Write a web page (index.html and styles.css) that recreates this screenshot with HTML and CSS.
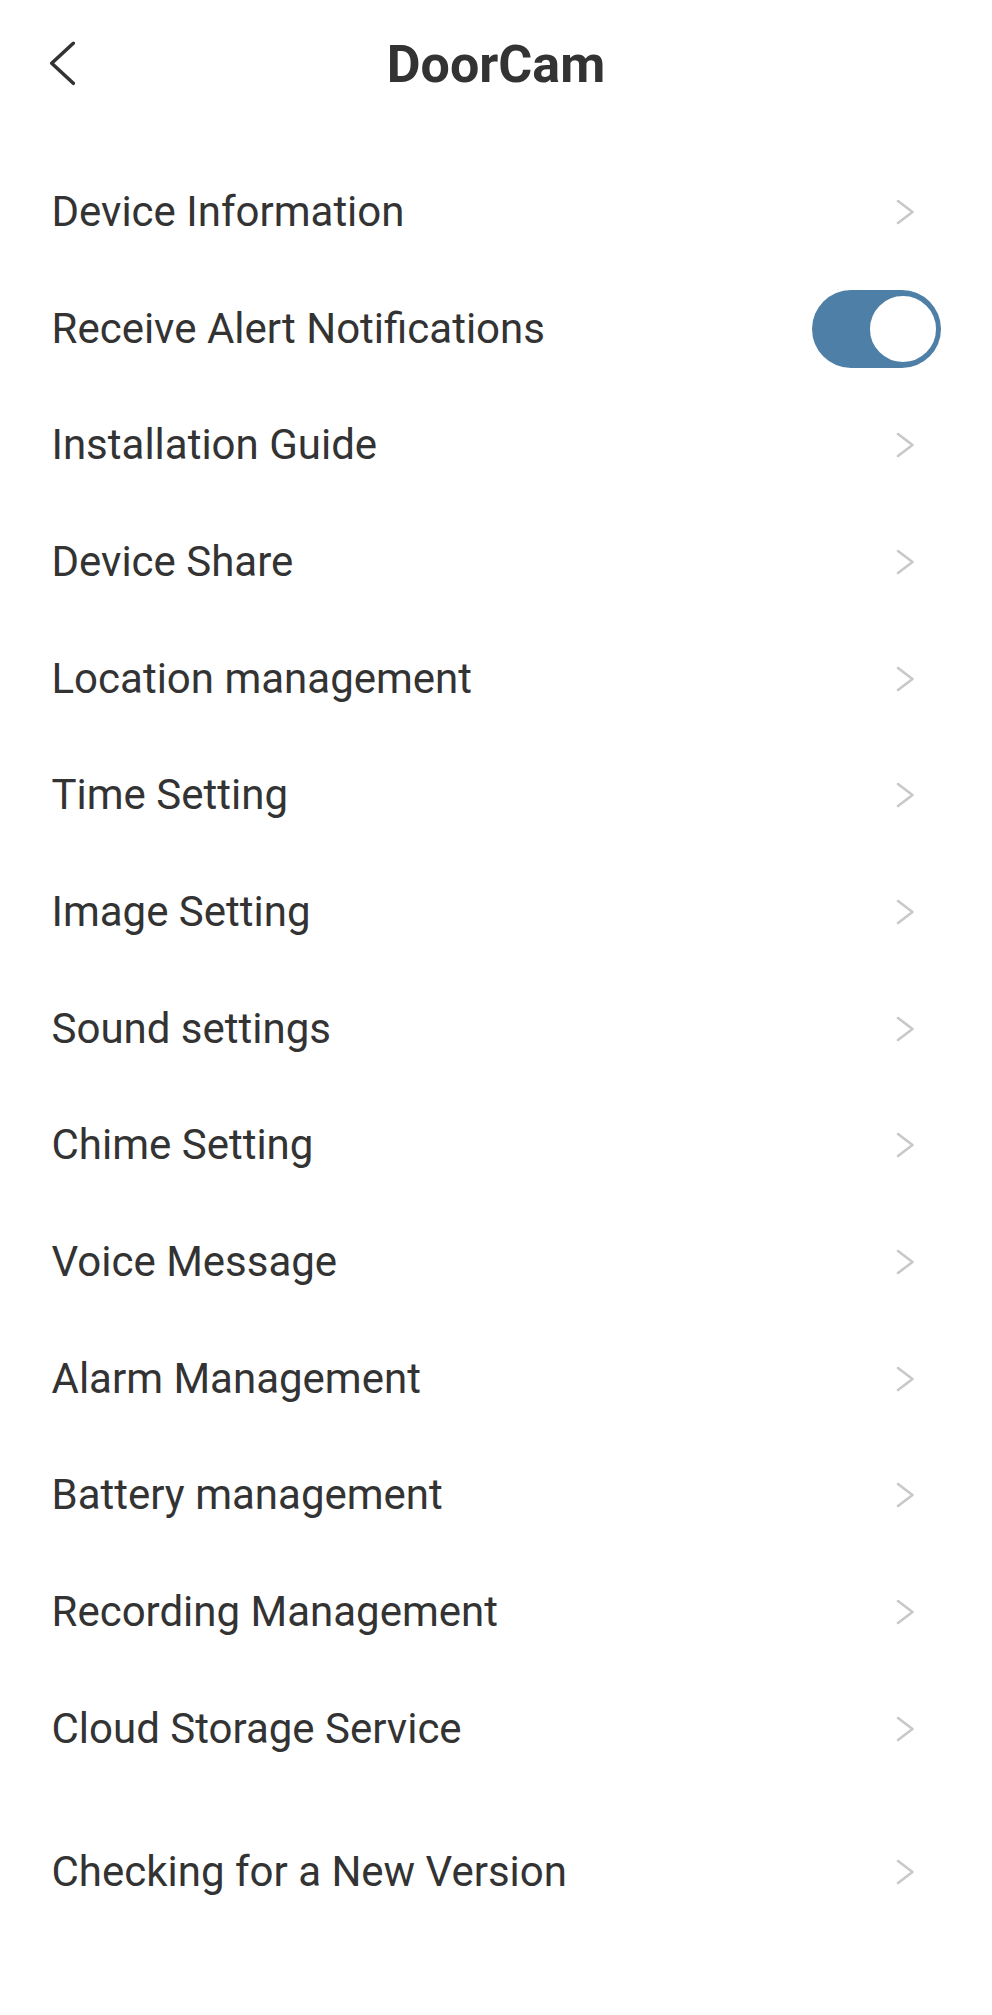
FILE: index.html
```html
<!DOCTYPE html>
<html lang="en">
<head>
  <meta charset="UTF-8">
  <meta name="viewport" content="width=device-width, initial-scale=1.0">
  <title>DoorCam</title>
  <link rel="stylesheet" href="styles.css">
</head>
<body>
  <div class="page">
    <div class="header">
      <button class="back" aria-label="Back">
        <svg width="26" height="46" viewBox="0 0 26 46">
          <path d="M24.3 3.3 L2.7 23.3 L24.3 43.3" fill="none" stroke="#333" stroke-width="3.6" stroke-linecap="round" stroke-linejoin="round"/>
        </svg>
      </button>
      <h1 class="title">DoorCam</h1>
      <div></div>
    </div>

    <ul class="menu">
      <li class="item"><span>Device Information</span><span class="arrow"></span></li>
      <li class="item">
        <span>Receive Alert Notifications</span>
        <label class="switch">
          <input type="checkbox" checked>
          <span class="track"><span class="knob"></span></span>
        </label>
      </li>
      <li class="item"><span>Installation Guide</span><span class="arrow"></span></li>
      <li class="item"><span>Device Share</span><span class="arrow"></span></li>
      <li class="item"><span>Location management</span><span class="arrow"></span></li>
      <li class="item"><span>Time Setting</span><span class="arrow"></span></li>
      <li class="item"><span>Image Setting</span><span class="arrow"></span></li>
      <li class="item"><span>Sound settings</span><span class="arrow"></span></li>
      <li class="item"><span>Chime Setting</span><span class="arrow"></span></li>
      <li class="item"><span>Voice Message</span><span class="arrow"></span></li>
      <li class="item"><span>Alarm Management</span><span class="arrow"></span></li>
      <li class="item"><span>Battery management</span><span class="arrow"></span></li>
      <li class="item"><span>Recording Management</span><span class="arrow"></span></li>
      <li class="item"><span>Cloud Storage Service</span><span class="arrow"></span></li>
      <li class="item item-separated"><span>Checking for a New Version</span><span class="arrow"></span></li>
    </ul>
  </div>

  <script>
    // подставляем шеврон в каждую строку
    document.querySelectorAll('.arrow').forEach(el => {
      el.innerHTML = `
        <svg width="20" height="26" viewBox="0 0 20 26">
          <path d="M3 2 L17.5 13 L3 24" fill="none" stroke="#c8c8c8" stroke-width="2.6" stroke-linecap="round" stroke-linejoin="round"/>
        </svg>
      `;
    });
  </script>
</body>
</html>
```

FILE: styles.css
```css
* {
  margin: 0;
  padding: 0;
  box-sizing: border-box;
  font-family: Roboto, "Liberation Sans", Arial, sans-serif;
}

body {
  background-color: #fff;
  color: #333;
}

.page {
  width: 100%;
  min-height: 100vh;
  background: #fff;
}

.header {
  display: grid;
  grid-template-columns: 1fr auto 1fr;
  align-items: center;
  height: 130px;
  margin-bottom: 23.5px;
  padding: 0 0 0 49px;
}

.back {
  background: none;
  border: none;
  width: 26px;
  height: 46px;
  cursor: pointer;
  display: flex;
  margin-top: -4px;
}

.title {
  font-size: 52px;
  font-weight: 700;
  color: #333;
  line-height: 130px;
  margin-left: -49px;
}

.menu {
  list-style: none;
}

.item {
  display: flex;
  align-items: center;
  justify-content: space-between;
  height: 116.7px;
  padding: 0 51px 0 51.5px;
  font-size: 42px;
  color: #333;
  line-height: 1;
  cursor: pointer;
}

.item-separated {
  margin-top: 27px;
}

.arrow {
  display: flex;
  margin-right: 26px;
}

.switch {
  display: flex;
  cursor: pointer;
}

.switch input {
  display: none;
}

.track {
  display: flex;
  align-items: center;
  justify-content: flex-end;
  width: 129px;
  height: 78px;
  border-radius: 39px;
  background-color: #4e7fa6;
  padding: 2px;
}

.knob {
  width: 72px;
  height: 72px;
  border-radius: 50%;
  background: #fff;
  border: 3px solid #4e7fa6;
}
```
